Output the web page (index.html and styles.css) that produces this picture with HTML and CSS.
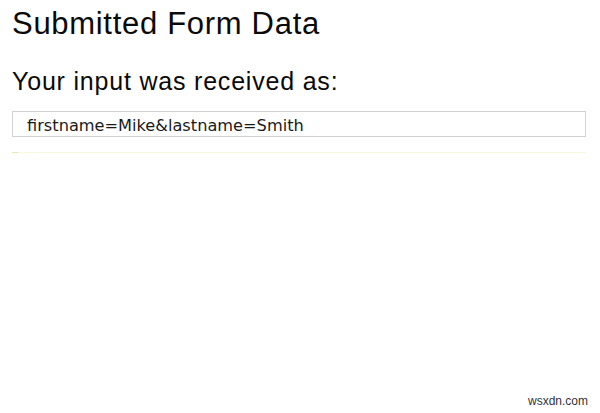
FILE: index.html
```html
<!DOCTYPE html>
<html>
<head>
<meta charset="utf-8">
<title>Submitted Form Data</title>
<link rel="stylesheet" href="styles.css">
</head>
<body>
<main class="page">
  <h1 class="title">Submitted Form Data</h1>
  <h2 class="subtitle">Your input was received as:</h2>
  <div class="result">firstname=Mike&amp;lastname=Smith</div>
  <div class="rule"></div>
</main>
<div class="watermark">wsxdn.com</div>
</body>
</html>
```
FILE: styles.css
```css
html, body {
  margin: 0;
  padding: 0;
  background: #ffffff;
  width: 600px;
  height: 413px;
  overflow: hidden;
}
body {
  position: relative;
  font-family: "Liberation Sans", Arial, sans-serif;
  color: #0a0a0a;
}
.page {
  padding: 0 14px 0 12px;
}
.title {
  margin: 7px 0 0;
  font-size: 31px;
  line-height: 34px;
  font-weight: normal;
  letter-spacing: 0.7px;
}
.subtitle {
  margin: 26px 0 0;
  font-size: 25px;
  line-height: 28px;
  font-weight: normal;
  letter-spacing: 0.8px;
}
.result {
  margin-top: 16px;
  border: 1px solid #d2d2d2;
  padding: 4px 14px 0;
  height: 20px;
  line-height: 20px;
  font-family: "DejaVu Sans", Verdana, sans-serif;
  font-size: 16.2px;
  color: #1a1a1a;
}
.rule {
  margin-top: 15px;
  height: 1px;
  background: linear-gradient(to right, #e2ecaa 0, #e2ecaa 6px, #f8f8dc 6px);
}
.watermark {
  position: absolute;
  right: 12px;
  bottom: 5px;
  font-family: "Liberation Sans", Arial, sans-serif;
  font-size: 12px;
  color: #333;
}
```
